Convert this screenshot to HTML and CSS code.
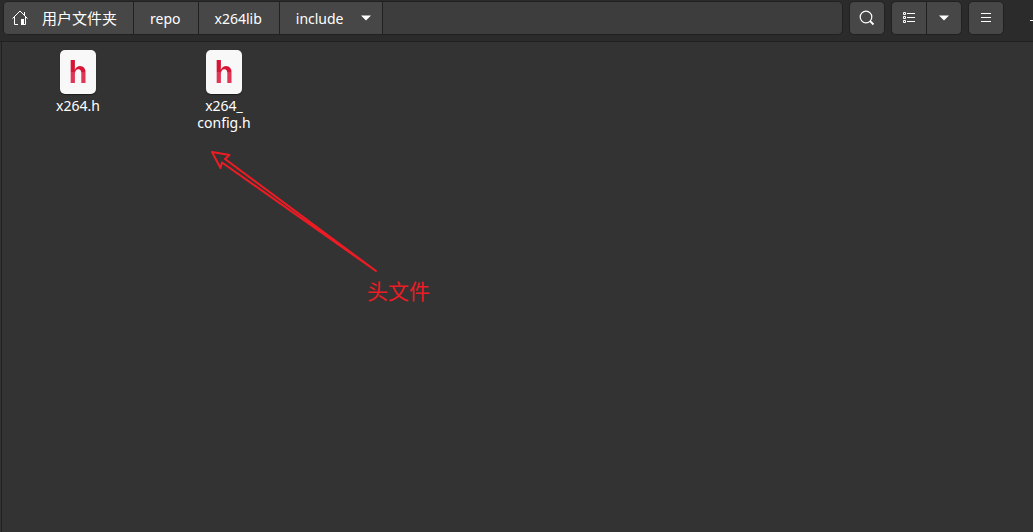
FILE: index.html
```html
<!DOCTYPE html>
<html lang="zh-CN">
<head>
<meta charset="utf-8">
<title>include</title>
<link rel="stylesheet" href="styles.css">
</head>
<body>
<header class="toolbar">
  <nav class="pathbar" aria-label="路径">
    <button class="crumb home">
      <svg width="16" height="16" viewBox="0 0 16 16" fill="none" stroke="currentColor" aria-hidden="true"><path d="M0.5 8.5L8 1l7.500 7.500M2.500 7v7.500H6M13.500 7v7.500H12M12.500 2v3.500"/><path d="M9 9h3v6H9z" fill="currentColor" stroke="none"/></svg>
      <span>用户文件夹</span>
    </button>
    <button class="crumb">repo</button>
    <button class="crumb">x264lib</button>
    <button class="crumb current">
      <span>include</span>
      <svg width="10" height="6" viewBox="0 0 10 6" fill="currentColor" aria-hidden="true"><path d="M0 0.500h10L5 5.500z"/></svg>
    </button>
  </nav>
  <button class="tool" aria-label="搜索">
    <svg width="16" height="16" viewBox="0 0 16 16" fill="none" stroke="currentColor" aria-hidden="true"><circle cx="7" cy="7" r="5.800" stroke-width="1.200"/><path d="M11 11l3.500 3.500" stroke-width="1.800"/></svg>
  </button>
  <div class="tool-group">
    <button class="tool" aria-label="列表视图">
      <svg width="14" height="12" viewBox="0 0 14 12" fill="none" stroke="currentColor" aria-hidden="true"><path d="M1.500 0.500h2v2h-2zM1.500 4.500h2v2h-2zM1.500 8.500h2v2h-2zM5 1.500h8M5 5.500h8M5 9.500h8"/></svg>
    </button>
    <button class="tool" aria-label="视图选项">
      <svg width="10" height="6" viewBox="0 0 10 6" fill="currentColor" aria-hidden="true"><path d="M0 0.500h10L5 5.500z"/></svg>
    </button>
  </div>
  <button class="tool" aria-label="菜单">
    <svg width="10" height="10" viewBox="0 0 10 10" fill="none" stroke="currentColor" aria-hidden="true"><path d="M0 0.500h10M0 4.500h10M0 8.500h10"/></svg>
  </button>
  <button class="minimize" aria-label="最小化"></button>
</header>
<main class="files">
  <figure class="file">
    <div class="sheet"><span class="letter">h</span></div>
    <figcaption>x264.h</figcaption>
  </figure>
  <figure class="file">
    <div class="sheet"><span class="letter">h</span></div>
    <figcaption>x264_<wbr>config.h</figcaption>
  </figure>
  <div class="note">
    <svg width="170" height="124" viewBox="0 0 170 124" fill="none" stroke="currentColor" stroke-width="2" stroke-linejoin="round" aria-hidden="true"><path d="M2 2L19.500 5L15 9L166 121L12 12.500L10.500 18Z"/></svg>
    <p class="note-text">头文件</p>
  </div>
</main>
</body>
</html>
```
FILE: styles.css
```css
* { box-sizing: border-box; }
body {
  margin: 0;
  min-height: 100vh;
  display: flex;
  flex-direction: column;
  background: #333;
  color: #fff;
  font: 14px/17px "Noto Sans", "Noto Sans CJK SC", sans-serif;
  overflow-x: hidden;
}
button {
  margin: 0;
  padding: 0;
  border: 0;
  background: none;
  color: inherit;
  font: inherit;
}
svg { display: block; flex: none; }
.toolbar {
  display: flex;
  gap: 6px;
  height: 42px;
  padding: 1px 0 6px 3px;
  background: #2b2b2b;
  border-bottom: 1px solid #202020;
}
.pathbar {
  flex: 1;
  display: flex;
  background: #3d3d3d;
  border: 1px solid #212121;
  border-radius: 5px;
  overflow: hidden;
}
.crumb {
  display: flex;
  align-items: center;
  padding: 0 17px 0 16px;
  background: #474747;
  border-right: 1px solid #212121;
}
.home { gap: 14px; padding: 0 16px 0 8px; font-size: 15px; }
.current { gap: 17px; padding-right: 11px; }
.tool {
  display: flex;
  align-items: center;
  justify-content: center;
  width: 36px;
  background: #474747;
  border: 1px solid #212121;
  border-radius: 5px;
}
.tool-group { display: flex; }
.tool-group .tool:first-child { border-radius: 5px 0 0 5px; border-right: 0; width: 35px; }
.tool-group .tool:last-child { border-radius: 0 5px 5px 0; }
.minimize {
  align-self: center;
  width: 3px;
  height: 1px;
  margin: 4px 0 0 20px;
  background: #fff;
}
.files {
  position: relative;
  flex: 1;
  display: flex;
  align-items: flex-start;
  gap: 66px;
  margin-left: 1px;
  padding: 8px 36px;
  border-left: 1px solid #202020;
}
.file {
  width: 80px;
  margin: 0;
  display: flex;
  flex-direction: column;
  align-items: center;
  gap: 3px;
}
.sheet {
  display: flex;
  justify-content: center;
  align-items: center;
  width: 36px;
  height: 44px;
  border-radius: 5px;
  background: #f8f8f8;
  box-shadow: 0 1px 1px #1c1c1c;
}
.letter {
  padding-top: 2px;
  font: bold 31px/42px "Liberation Sans Narrow", "Liberation Sans", sans-serif;
  background: linear-gradient(#d71436 50%, #df3658 50%);
  background-clip: text;
  -webkit-background-clip: text;
  color: transparent;
}
.file figcaption { text-align: center; }
.note {
  position: absolute;
  left: 208px;
  top: 108px;
  color: #ed1c24;
}
.note-text {
  margin: 1px 0 0 157px;
  font: 21px/30px "Noto Sans CJK SC", sans-serif;
}
```
